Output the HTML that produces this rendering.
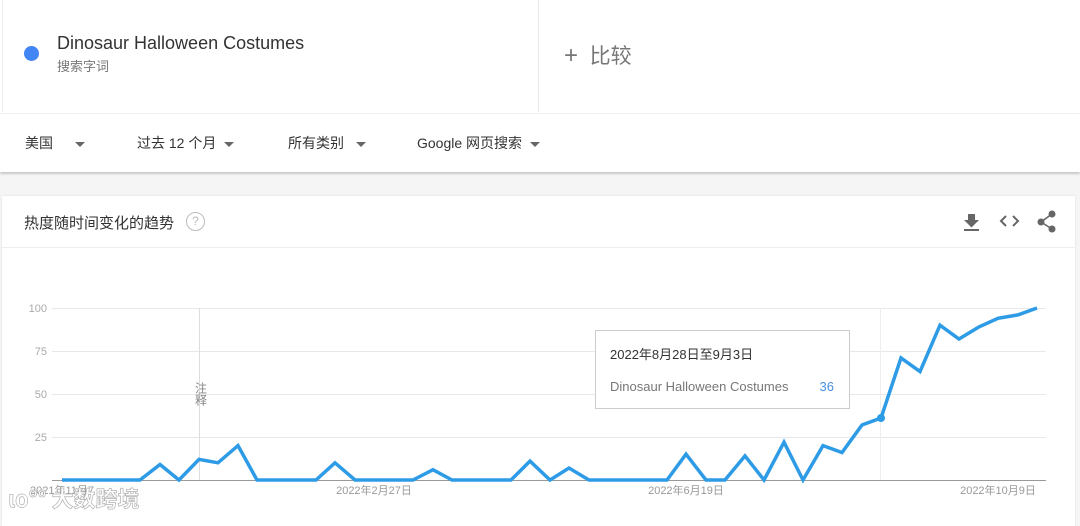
<!DOCTYPE html>
<html><head><meta charset="utf-8"><style>
*{margin:0;padding:0;box-sizing:border-box}
body{width:1080px;height:520px;overflow:hidden;background:#f5f5f5;font-family:"Liberation Sans","Noto Sans CJK SC",sans-serif;position:relative}
.top{position:absolute;left:0;top:0;width:1080px;height:113px;background:#fff}
.term{position:absolute;left:2px;top:0;width:537px;height:112px;border-right:1px solid #e6e6e6;border-left:1px solid #eee}
.dot{position:absolute;left:24px;top:46px;width:15px;height:15px;border-radius:50%;background:#4285f4}
.t1{position:absolute;left:57px;top:33px;font-size:18px;color:#333}
.t2{position:absolute;left:57px;top:56px;font-size:13px;color:#777}
.cmp{position:absolute;left:564px;top:40px;font-size:21px;color:#777}
.filters{position:absolute;left:0;top:113px;width:1080px;height:59px;background:#fff;border-top:1px solid #eee;box-shadow:0 2px 2px rgba(0,0,0,.18)}
.f{position:absolute;top:19px;font-size:14px;color:#333}
.tri{display:inline-block;width:0;height:0;border-left:5px solid transparent;border-right:5px solid transparent;border-top:5px solid #666;vertical-align:middle;margin-left:8px}
.card{position:absolute;left:2px;top:196px;width:1073px;height:330px;background:#fff;box-shadow:0 0 2px rgba(0,0,0,.1)}
.hd{position:absolute;left:0;top:0;width:100%;height:52px;border-bottom:1px solid #eee}
.ht{position:absolute;left:22px;top:16px;font-size:15px;color:#333}
.q{position:absolute;left:184px;top:16px;width:19px;height:19px;border:1.5px solid #bbb;border-radius:50%;font-size:12px;color:#bbb;text-align:center;line-height:16px}
svg{position:absolute;left:0;top:0}
</style></head><body>
<div class="top">
 <div class="term"></div>
 <div class="dot"></div>
 <div class="t1">Dinosaur Halloween Costumes</div>
 <div class="t2">搜索字词</div>
 <div class="cmp"><span style="font-size:24px;font-weight:300">+</span>&nbsp; 比较</div>
</div>
<div class="filters">
 <div class="f" style="left:25px">美国<span class="tri" style="margin-left:22px"></span></div>
 <div class="f" style="left:137px">过去 12 个月<span class="tri"></span></div>
 <div class="f" style="left:288px">所有类别<span class="tri" style="margin-left:12px"></span></div>
 <div class="f" style="left:417px">Google 网页搜索<span class="tri"></span></div>
</div>
<div class="card">
 <div class="hd"><div class="ht">热度随时间变化的趋势</div><div class="q">?</div></div>
</div>
<svg width="1080" height="520" viewBox="0 0 1080 520">
 <g fill="#666">
  <path d="M968 214h7v6h4l-7.5 7.5-7.5-7.5h4z"/><rect x="964" y="229" width="15" height="2"/>
 </g>
 <path d="M1006 216l-5 5 5 5M1013 216l5 5-5 5" stroke="#666" stroke-width="2" fill="none"/>
 <g fill="#666"><circle cx="1052" cy="214" r="3.5"/><circle cx="1041" cy="222" r="3.5"/><circle cx="1052" cy="229" r="3.5"/></g>
 <path d="M1052 214L1041 222 1052 229" stroke="#666" stroke-width="1.6" fill="none"/>
 <g stroke="#e8e8e8" stroke-width="1">
  <line x1="52" y1="308.5" x2="1046" y2="308.5"/><line x1="52" y1="351.5" x2="1046" y2="351.5"/>
  <line x1="52" y1="394.5" x2="1046" y2="394.5"/><line x1="52" y1="437.5" x2="1046" y2="437.5"/>
 </g>
 <line x1="52" y1="480.5" x2="1046" y2="480.5" stroke="#999"/>
 <line x1="199.5" y1="308" x2="199.5" y2="480" stroke="#ddd"/>
 <line x1="880.5" y1="308" x2="880.5" y2="480" stroke="#eee"/>
 <g font-family="Liberation Sans" font-size="11" fill="#aaa" text-anchor="end">
  <text x="47" y="312">100</text><text x="47" y="355">75</text><text x="47" y="398">50</text><text x="47" y="441">25</text>
 </g>
 <g font-family="Liberation Sans,Noto Sans CJK SC" font-size="11" fill="#999" text-anchor="middle">
  <text x="62" y="494">2021年11月7</text><text x="374" y="494">2022年2月27日</text><text x="686" y="494">2022年6月19日</text><text x="998" y="494">2022年10月9日</text>
 </g>
 <text x="201" y="382" font-family="Noto Sans CJK SC" font-size="12" fill="#888" writing-mode="tb">注释</text>
 <polyline fill="none" stroke="#2e9be6" stroke-width="3.5" stroke-linejoin="miter" points="62,480 81,480 101,480 121,480 140,480 160,464.5 179,480 199,459.4 218,462.8 238,445.6 257,480 277,480 296,480 316,480 335,462.8 355,480 374,480 394,480 413,480 433,469.7 452,480 472,480 491,480 511,480 530,461.1 550,480 569,468 589,480 608,480 628,480 647,480 667,480 686,454.2 706,480 725,480 745,455.9 764,480 784,442.2 803,480 823,445.6 842,452.5 862,425 881,418 901,357.9 920,371.6 940,325.2 959,339 979,326.9 998,318.3 1018,314.9 1037,308"/>
 <circle cx="881" cy="418" r="4" fill="#2e9be6"/>
 <rect x="595.5" y="330.5" width="254" height="78" fill="#fff" stroke="#ccc"/>
 <text x="610" y="359" font-family="Liberation Sans,Noto Sans CJK SC" font-size="13" fill="#333">2022年8月28日至9月3日</text>
 <text x="610" y="391" font-family="Liberation Sans" font-size="13" fill="#777">Dinosaur Halloween Costumes</text>
 <text x="834" y="391" font-family="Liberation Sans" font-size="13" fill="#4a90e2" text-anchor="end">36</text>
 <text x="8" y="507" font-family="Noto Sans CJK SC" font-size="22" font-weight="bold" fill="#fff" stroke="#aaa" stroke-width="0.7" opacity="0.9">ιο°° 大数跨境</text>
</svg>
</body></html>
